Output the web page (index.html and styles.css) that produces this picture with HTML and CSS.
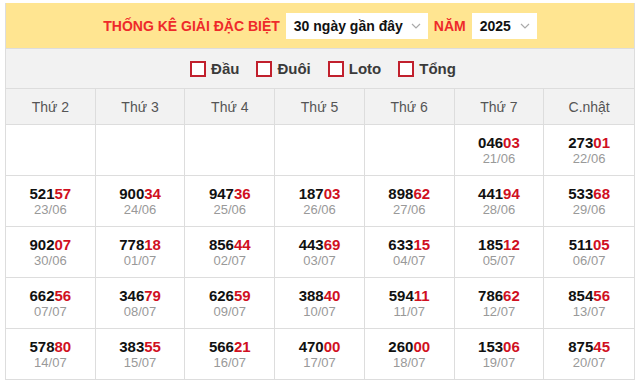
FILE: index.html
```html
<!DOCTYPE html>
<html>
<head>
<meta charset="utf-8">
<link rel="stylesheet" href="styles.css">
</head>
<body>
<div class="wrap">
  <div class="box">
    <div class="head">
      <span class="title">THỐNG KÊ GIẢI ĐẶC BIỆT</span>
      <span class="sel sel-days">30 ngày gần đây<svg class="chev" width="10" height="6" viewBox="0 0 10 6"><path d="M1 1 L5 5 L9 1" fill="none" stroke="#aaa" stroke-width="1.2"/></svg></span>
      <span class="title">NĂM</span>
      <span class="sel sel-year">2025<svg class="chev" width="10" height="6" viewBox="0 0 10 6"><path d="M1 1 L5 5 L9 1" fill="none" stroke="#aaa" stroke-width="1.2"/></svg></span>
    </div>
    <div class="filters">
      <label class="chk"><span class="cb"></span>Đầu</label>
      <label class="chk"><span class="cb"></span>Đuôi</label>
      <label class="chk"><span class="cb"></span>Loto</label>
      <label class="chk"><span class="cb"></span>Tổng</label>
    </div>
    <div class="grid">
      <div class="th">Thứ 2</div><div class="th">Thứ 3</div><div class="th">Thứ 4</div><div class="th">Thứ 5</div><div class="th">Thứ 6</div><div class="th">Thứ 7</div><div class="th">C.nhật</div>

      <div class="td"></div><div class="td"></div><div class="td"></div><div class="td"></div><div class="td"></div>
      <div class="td"><b>046<i>03</i></b><small>21/06</small></div>
      <div class="td"><b>273<i>01</i></b><small>22/06</small></div>

      <div class="td"><b>521<i>57</i></b><small>23/06</small></div>
      <div class="td"><b>900<i>34</i></b><small>24/06</small></div>
      <div class="td"><b>947<i>36</i></b><small>25/06</small></div>
      <div class="td"><b>187<i>03</i></b><small>26/06</small></div>
      <div class="td"><b>898<i>62</i></b><small>27/06</small></div>
      <div class="td"><b>441<i>94</i></b><small>28/06</small></div>
      <div class="td"><b>533<i>68</i></b><small>29/06</small></div>

      <div class="td"><b>902<i>07</i></b><small>30/06</small></div>
      <div class="td"><b>778<i>18</i></b><small>01/07</small></div>
      <div class="td"><b>856<i>44</i></b><small>02/07</small></div>
      <div class="td"><b>443<i>69</i></b><small>03/07</small></div>
      <div class="td"><b>633<i>15</i></b><small>04/07</small></div>
      <div class="td"><b>185<i>12</i></b><small>05/07</small></div>
      <div class="td"><b>511<i>05</i></b><small>06/07</small></div>

      <div class="td"><b>662<i>56</i></b><small>07/07</small></div>
      <div class="td"><b>346<i>79</i></b><small>08/07</small></div>
      <div class="td"><b>626<i>59</i></b><small>09/07</small></div>
      <div class="td"><b>388<i>40</i></b><small>10/07</small></div>
      <div class="td"><b>594<i>11</i></b><small>11/07</small></div>
      <div class="td"><b>786<i>62</i></b><small>12/07</small></div>
      <div class="td"><b>854<i>56</i></b><small>13/07</small></div>

      <div class="td"><b>578<i>80</i></b><small>14/07</small></div>
      <div class="td"><b>383<i>55</i></b><small>15/07</small></div>
      <div class="td"><b>566<i>21</i></b><small>16/07</small></div>
      <div class="td"><b>470<i>00</i></b><small>17/07</small></div>
      <div class="td"><b>260<i>00</i></b><small>18/07</small></div>
      <div class="td"><b>153<i>06</i></b><small>19/07</small></div>
      <div class="td"><b>875<i>45</i></b><small>20/07</small></div>
    </div>
  </div>
</div>
</body>
</html>
```
FILE: styles.css
```css
* { box-sizing: border-box; }
body {
  margin: 0;
  background: #fff;
  font-family: "Liberation Sans", Arial, sans-serif;
}
.wrap { padding: 3px 5px; }
.box {
  width: 630px;
  border-left: 1px solid #ddd;
  border-right: 1px solid #ddd;
}
.head {
  height: 46px;
  background: #ffe591;
  display: flex;
  align-items: center;
  justify-content: center;
  gap: 6px;
  border-bottom: 1px solid #ddd;
  padding-left: 0;
}
.title {
  color: #ee2a2a;
  font-weight: bold;
  font-size: 14px;
}
.sel {
  background: #fff;
  height: 26px;
  display: flex;
  align-items: center;
  justify-content: space-between;
  white-space: nowrap;
  font-weight: bold;
  font-size: 14px;
  color: #111;
  padding: 0 7px 0 8px;
}
.sel-days { width: 142px; }
.sel-year { width: 65px; margin-left: 0; }
.chev { margin-left: 6px; flex: none; }
.filters {
  height: 40px;
  background: #f2f2f2;
  border-bottom: 1px solid #ddd;
  display: flex;
  align-items: center;
  justify-content: center;
  gap: 17px;
  padding-left: 6px;
}
.chk {
  display: flex;
  align-items: center;
  font-weight: bold;
  font-size: 15px;
  color: #3a3a3a;
}
.cb {
  width: 16px;
  height: 16px;
  border: 2px solid #c1202d;
  margin-right: 5px;
  background: #fff;
}
.grid {
  display: grid;
  grid-template-columns: repeat(7, 1fr);
}
.th, .td {
  border-right: 1px solid #ddd;
  border-bottom: 1px solid #ddd;
  text-align: center;
}
.th:nth-child(7n), .td:nth-child(7n) { border-right: none; }
.th {
  height: 36px;
  background: #f2f2f2;
  font-size: 14px;
  color: #555;
  display: flex;
  align-items: center;
  justify-content: center;
}
.td {
  height: 51px;
  display: flex;
  flex-direction: column;
  justify-content: center;
  align-items: center;
  padding-top: 1px;
}
.td b {
  font-size: 15px;
  font-weight: bold;
  color: #111;
  line-height: 17px;
}
.td b i {
  font-style: normal;
  color: #d0101f;
}
.td small {
  font-size: 13px;
  color: #999;
  line-height: 16px;
}
```
